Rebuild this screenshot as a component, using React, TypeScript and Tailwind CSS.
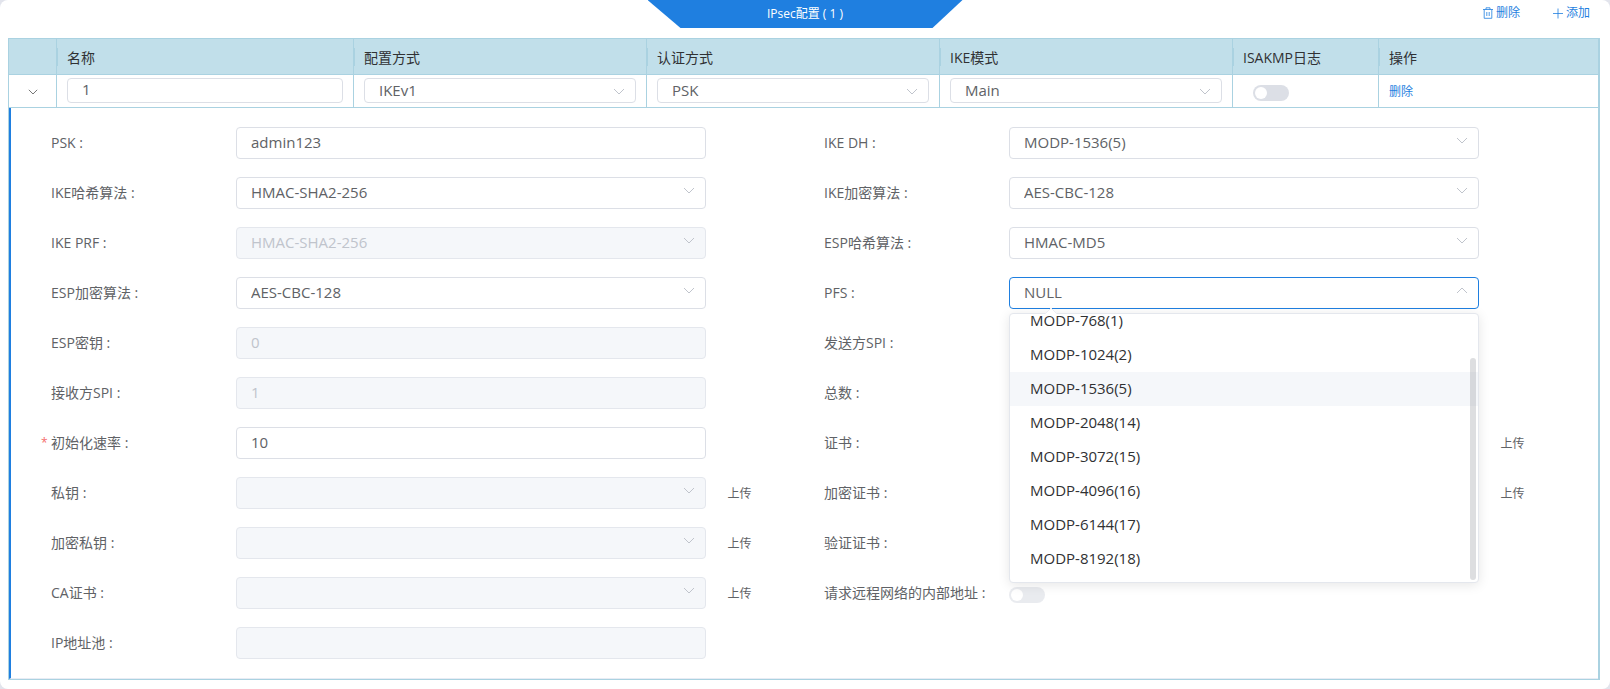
import React, { useLayoutEffect, useRef, useState } from 'react';
import clsx from 'clsx';

type Field = {
  id: string;
  label: string;
  type: 'input' | 'select' | 'switch' | 'open';
  value?: string;
  disabled?: boolean;
  required?: boolean;
  upload?: boolean;
};

// listed row by row: left column, right column
const fields: Field[] = [
  { id: 'psk', label: 'PSK', type: 'input', value: 'admin123' },
  { id: 'ikeDh', label: 'IKE DH', type: 'select', value: 'MODP-1536(5)' },
  { id: 'ikeHash', label: 'IKE哈希算法', type: 'select', value: 'HMAC-SHA2-256' },
  { id: 'ikeEnc', label: 'IKE加密算法', type: 'select', value: 'AES-CBC-128' },
  { id: 'ikePrf', label: 'IKE PRF', type: 'select', value: 'HMAC-SHA2-256', disabled: true },
  { id: 'espHash', label: 'ESP哈希算法', type: 'select', value: 'HMAC-MD5' },
  { id: 'espEnc', label: 'ESP加密算法', type: 'select', value: 'AES-CBC-128' },
  { id: 'pfs', label: 'PFS', type: 'open', value: 'NULL' },
  { id: 'espKey', label: 'ESP密钥', type: 'input', value: '0', disabled: true },
  { id: 'sendSpi', label: '发送方SPI', type: 'input', disabled: true },
  { id: 'recvSpi', label: '接收方SPI', type: 'input', value: '1', disabled: true },
  { id: 'total', label: '总数', type: 'input' },
  { id: 'initRate', label: '初始化速率', type: 'input', value: '10', required: true },
  { id: 'cert', label: '证书', type: 'select', disabled: true, upload: true },
  { id: 'privateKey', label: '私钥', type: 'select', disabled: true, upload: true },
  { id: 'encCert', label: '加密证书', type: 'select', disabled: true, upload: true },
  { id: 'encKey', label: '加密私钥', type: 'select', disabled: true, upload: true },
  { id: 'verifyCert', label: '验证证书', type: 'select', disabled: true },
  { id: 'caCert', label: 'CA证书', type: 'select', disabled: true, upload: true },
  { id: 'innerAddr', label: '请求远程网络的内部地址', type: 'switch', disabled: true },
  { id: 'ipPool', label: 'IP地址池', type: 'input', disabled: true },
];

const pfsOptions = [
  'NULL',
  'MODP-768(1)',
  'MODP-1024(2)',
  'MODP-1536(5)',
  'MODP-2048(14)',
  'MODP-3072(15)',
  'MODP-4096(16)',
  'MODP-6144(17)',
  'MODP-8192(18)',
];

const box =
  'block w-full rounded border bg-white px-3.5 pb-0.5 text-[15px] text-[#606266] outline-none appearance-none disabled:border-[#e4e7ed] disabled:bg-[#f5f7fa] disabled:text-[#c0c4cc] disabled:opacity-100';

function Chevron({ className, up }: { className?: string; up?: boolean }) {
  return (
    <svg viewBox="0 0 12 7" fill="none" stroke="currentColor" className={clsx('h-[7px] w-3', className)}>
      <path d={up ? 'M1 6L6 1L11 6' : 'M1 1L6 6L11 1'} />
    </svg>
  );
}

function Select({ id, label, value = '', disabled, small, open }: {
  id: string; label?: string; value?: string; disabled?: boolean; small?: boolean; open?: boolean;
}) {
  return (
    <div className="relative">
      <select
        id={id}
        aria-label={label}
        defaultValue={value}
        disabled={disabled}
        className={clsx(box, small ? 'h-[25px]' : 'h-8', open ? 'border-[#1f7fe0]' : 'border-[#dcdfe6]')}
      >
        <option>{value}</option>
      </select>
      <Chevron up={open} className="pointer-events-none absolute top-2.5 right-[11px] text-[#c0c4cc]" />
    </div>
  );
}

function Switch({ id, label, disabled, className }: { id: string; label?: string; disabled?: boolean; className?: string }) {
  return (
    <input
      id={id}
      type="checkbox"
      role="switch"
      aria-label={label}
      disabled={disabled}
      className={clsx(
        'block h-4 w-9 appearance-none rounded-full bg-[#dcdfe6] p-0.5 before:block before:size-3 before:rounded-full before:bg-white checked:bg-[#1f7fe0] checked:before:ml-5 disabled:opacity-60',
        className
      )}
    />
  );
}

function PfsMenu() {
  const list = useRef<HTMLUListElement>(null);
  const [hovered, setHovered] = useState('MODP-1536(5)');

  useLayoutEffect(() => {
    if (list.current) list.current.scrollTop = list.current.scrollHeight;
  }, []);

  return (
    <div className="absolute inset-x-0 top-9 z-10 rounded border border-[#e4e7ed] bg-white shadow-[0_2px_12px_0_rgba(0,0,0,0.1)]">
      <svg viewBox="0 0 12 7" className="absolute -top-1.5 left-[35px] h-[7px] w-3">
        <path d="M0 6L6 0L12 6V7H0Z" fill="#fff" />
        <path d="M0 6L6 0L12 6" fill="none" stroke="#ebeef5" />
      </svg>
      <ul
        ref={list}
        role="listbox"
        className="h-[268px] overflow-y-auto py-1.5 [scrollbar-width:none]"
      >
        {pfsOptions.map((option) => (
          <li
            key={option}
            role="option"
            aria-selected={option === 'NULL'}
            onMouseEnter={() => setHovered(option)}
            className={clsx(
              'h-[34px] cursor-pointer px-5 text-[15px] leading-8 text-[#303133]',
              option === hovered && 'bg-[#f5f7fa]'
            )}
          >
            {option}
          </li>
        ))}
      </ul>
      <div className="absolute right-0.5 bottom-0.5 h-[222px] w-1.5 rounded-full bg-[#909399]/30" />
    </div>
  );
}

function FormItem({ field }: { field: Field }) {
  const { id, label, type, value, disabled, required, upload } = field;
  return (
    <div className="flex h-8 items-center">
      <label htmlFor={id} className="relative w-[185px] shrink-0 text-sm leading-8 text-[#606266]">
        {required && <span className="absolute -left-2.5 text-xs leading-8 text-[#f56c6c]">*</span>}
        {label} :
      </label>
      <div className="flex min-w-0 flex-1 items-center">
        <div className="relative w-4/5">
          {type === 'input' && (
            <input id={id} defaultValue={value} disabled={disabled} className={clsx(box, 'h-8 border-[#dcdfe6]')} />
          )}
          {type === 'select' && <Select id={id} value={value} disabled={disabled} />}
          {type === 'switch' && <Switch id={id} disabled={disabled} className="mt-1" />}
          {type === 'open' && (
            <>
              <Select id={id} value={value} open />
              <PfsMenu />
            </>
          )}
        </div>
        {upload && <button className="ml-[21px] pt-0.5 text-xs text-[#606266]">上传</button>}
      </div>
    </div>
  );
}

function Th({ children }: { children?: React.ReactNode }) {
  return (
    <th className="relative h-9 border-r border-b border-[#aad2e1] px-2.5 pt-0.5 text-left text-sm leading-5 font-normal text-[#303133] before:absolute before:top-[9px] before:left-0 before:h-[18px] before:w-px before:bg-[#aad2e1] first:before:hidden last:border-r-0">
      {children}
    </th>
  );
}

function Td({ children }: { children?: React.ReactNode }) {
  return (
    <td className="h-[33px] border-r border-b border-[#aad2e1] px-2.5 pb-0.5 align-middle last:border-r-0">
      {children}
    </td>
  );
}

export default function App() {
  const [expanded, setExpanded] = useState(true);

  return (
    <div className="min-h-screen bg-[#e2e4ec] font-['Open_Sans','Noto_Sans_CJK_SC',sans-serif]">
      <div className="min-h-screen rounded-lg bg-white pb-2">
        <header className="grid h-[38px] grid-cols-[1fr_315px_1fr] items-start">
          <h1 className="col-start-2 h-7 bg-[#1f7fe0] text-center text-xs leading-7 text-white [clip-path:polygon(0_0,100%_0,285px_100%,33px_100%)]">
            IPsec配置 ( 1 )
          </h1>
          <div className="flex h-[26px] items-center justify-end gap-8 pr-5 text-xs text-[#1f7fe0]">
            <button className="flex items-center gap-0.5">
              <svg viewBox="0 0 12 12" fill="none" stroke="currentColor" className="size-3">
                <path d="M1 2.5H11M4 2.5V.8H8V2.5M2.2 2.5V11.3H9.8V2.5M4.8 5V9M7.2 5V9" strokeWidth=".8" />
              </svg>
              删除
            </button>
            <button className="flex items-center gap-0.5">
              <svg viewBox="0 0 12 12" fill="none" stroke="currentColor" className="size-3">
                <path d="M1 6.5H11M6 1.5V11.5" strokeWidth=".8" />
              </svg>
              添加
            </button>
          </div>
        </header>

        <div className="mr-2.5 ml-2 border border-r-2 border-[#aad2e1]">
          <table className="w-full table-fixed border-separate border-spacing-0">
            <colgroup>
              <col className="w-12" />
              <col className="w-[297px]" />
              <col />
              <col />
              <col />
              <col className="w-[146px]" />
              <col className="w-[219px]" />
            </colgroup>
            <thead className="bg-[#c1dfea]">
              <tr>
                <Th />
                <Th>名称</Th>
                <Th>配置方式</Th>
                <Th>认证方式</Th>
                <Th>IKE模式</Th>
                <Th>ISAKMP日志</Th>
                <Th>操作</Th>
              </tr>
            </thead>
            <tbody>
              <tr>
                <Td>
                  <button
                    aria-label="展开"
                    aria-expanded={expanded}
                    onClick={() => setExpanded(!expanded)}
                    className="mx-auto block pt-1 text-[#777]"
                  >
                    <svg viewBox="0 0 10 6" fill="none" stroke="currentColor" className="h-1.5 w-2.5">
                      <path d="M.8 .8L5 5L9.2 .8" />
                    </svg>
                  </button>
                </Td>
                <Td>
                  <input aria-label="名称" defaultValue="1" className={clsx(box, 'h-[25px] border-[#dcdfe6]')} />
                </Td>
                <Td><Select id="mode" label="配置方式" value="IKEv1" small /></Td>
                <Td><Select id="auth" label="认证方式" value="PSK" small /></Td>
                <Td><Select id="ikeMode" label="IKE模式" value="Main" small /></Td>
                <Td><Switch id="isakmpLog" label="ISAKMP日志" className="mt-1.5 ml-2.5" /></Td>
                <Td><button className="block pt-1 text-xs text-[#1f7fe0]">删除</button></Td>
              </tr>
              {expanded && (
                <tr>
                  <td colSpan={7} className="border-b border-l-2 border-b-[#e8ecf4] border-l-[#1f7fe0] py-[19px] pr-px pl-10">
                    <div className="grid grid-cols-2 gap-y-[18px]">
                      {fields.map((field) => (
                        <FormItem key={field.id} field={field} />
                      ))}
                    </div>
                  </td>
                </tr>
              )}
            </tbody>
          </table>
        </div>
      </div>
    </div>
  );
}
